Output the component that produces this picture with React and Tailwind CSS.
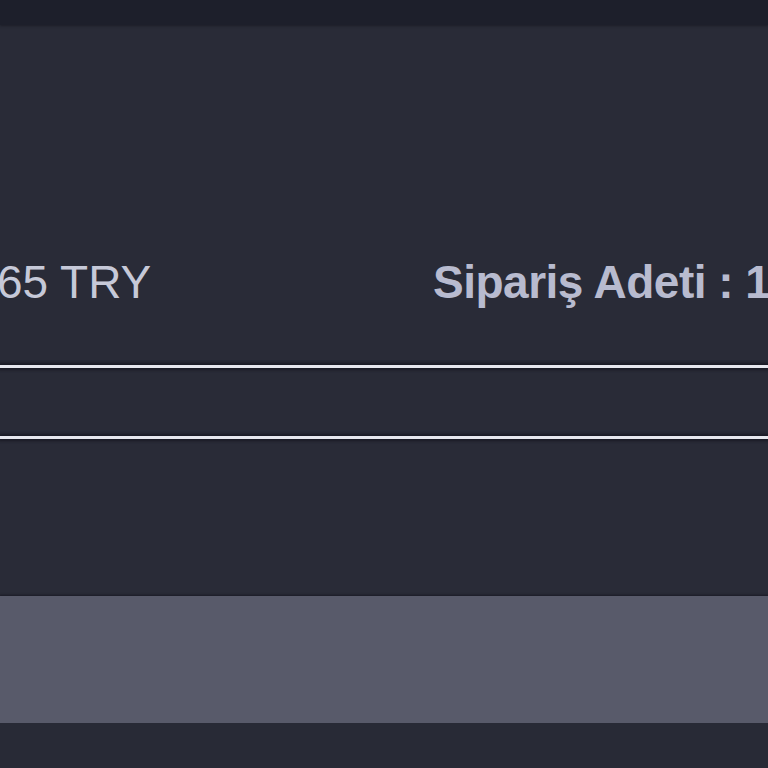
export default function App() {
  return (
    <div className="w-[768px] h-[768px] overflow-hidden bg-[#292b37] flex flex-col" style={{ fontFamily: '"Liberation Sans", Arial, sans-serif' }}>
      <div className="h-[25px] bg-[#1d1f2b] shrink-0 shadow-[0_1px_2px_rgba(20,22,30,0.6)]" />
      <div className="h-[340px] shrink-0 pt-[230px] flex items-start whitespace-nowrap">
        <span className="ml-[-3px] w-[153px] shrink-0 text-[46px] leading-[54px] text-[#c6c9d8]">65 TRY</span>
        <span className="ml-[283px] shrink-0 text-[46px] leading-[54px] font-bold tracking-[-0.5px] text-[#b8bbcf]">Sipariş Adeti : 1</span>
      </div>
      <div className="h-[3px] shrink-0 bg-[#e6e7ee] shadow-[0_0_3px_2px_rgba(22,23,32,0.8)]" />
      <div className="h-[68px] shrink-0" />
      <div className="h-[3px] shrink-0 bg-[#e6e7ee] shadow-[0_0_3px_2px_rgba(22,23,32,0.8)]" />
      <div className="h-[157px] shrink-0" />
      <div className="h-[127px] shrink-0 bg-[#585a6a] shadow-[0_0_2px_1px_rgba(22,23,32,0.8)]" />
      <div className="flex-1 bg-[#282a36]" />
    </div>
  );
}
